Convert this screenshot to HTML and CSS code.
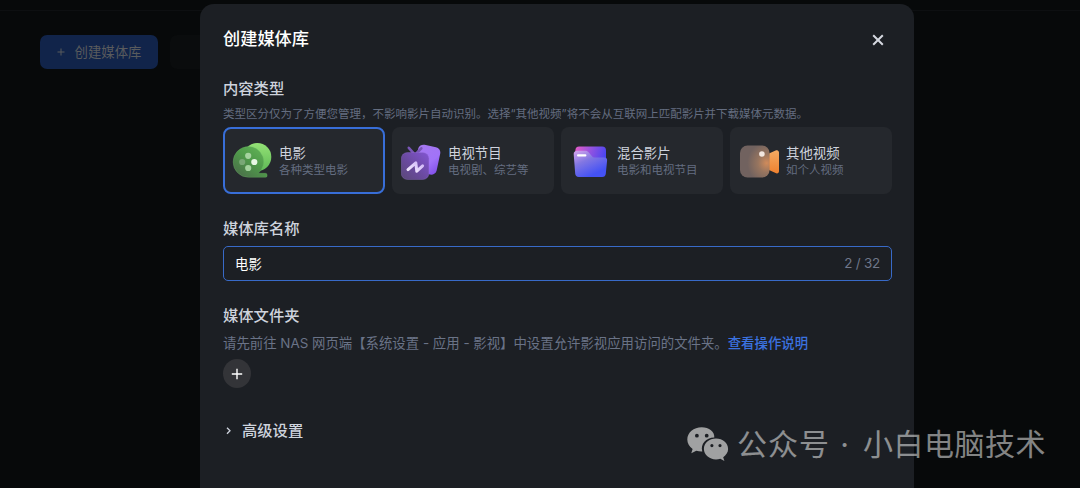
FILE: index.html
```html
<!DOCTYPE html>
<html lang="zh-CN">
<head>
    <meta charset="UTF-8">
    <meta name="viewport" content="width=device-width, initial-scale=1.0">
    <title>创建媒体库</title>
    <link rel="stylesheet" href="styles.css">
</head>
<body>
    <div class="page">
        <div class="topbar"></div>
        <div class="toolbar">
            <button type="button" class="create-btn">
                <svg width="8" height="8" viewBox="0 0 8 8"><path d="M4 .5v7M.5 4h7" stroke="currentColor" fill="none"/></svg>
                <span>创建媒体库</span>
            </button>
            <button type="button" class="refresh-btn" aria-label="刷新"></button>
        </div>
    </div>

    <!-- 弹窗 -->
    <div class="modal">
        <div class="modal-header">
            <h1>创建媒体库</h1>
            <button type="button" class="close-btn" aria-label="关闭">
                <svg width="12" height="12" viewBox="0 0 12 12"><path d="M1.2 1.2l9.6 9.6M10.8 1.2l-9.6 9.6" stroke="currentColor" stroke-width="2" fill="none"/></svg>
            </button>
        </div>

        <h2 class="type-title">内容类型</h2>
        <p class="type-hint">类型区分仅为了方便您管理，不影响影片自动识别。选择“其他视频”将不会从互联网上匹配影片并下载媒体元数据。</p>
        <div class="cards">
            <div class="card active">
                <svg class="card-icon" width="40" height="40" viewBox="0 0 40 40">
                    <defs>
                        <linearGradient id="reelBack" x1="0" y1="0" x2="0" y2="1">
                            <stop offset="0" stop-color="#94e276"/>
                            <stop offset="1" stop-color="#5fb956"/>
                        </linearGradient>
                        <linearGradient id="reelFront" x1="1" y1="0" x2=".2" y2="1">
                            <stop offset="0" stop-color="#66b85a"/>
                            <stop offset=".5" stop-color="#4f9b4a"/>
                            <stop offset="1" stop-color="#4b6f4a"/>
                        </linearGradient>
                    </defs>
                    <circle cx="25.3" cy="16" r="14" fill="url(#reelBack)"/>
                    <path d="M16.5 5.5a15.2 15.2 0 0 1 9.8 26.8h7.2a1.6 1.6 0 0 1 1.6 1.6v.8a1.6 1.6 0 0 1-1.6 1.6h-17a15.4 15.4 0 0 1 0-30.8z" fill="url(#reelFront)" stroke="#6fb868" stroke-opacity=".5" stroke-width=".6"/>
                    <circle cx="16.2" cy="14.8" r="3.1" fill="#a5d39f"/>
                    <circle cx="10.2" cy="21" r="3.1" fill="#79a776"/>
                    <circle cx="22.3" cy="21" r="3.1" fill="#e8f8e5"/>
                    <circle cx="16.2" cy="27" r="3.1" fill="#a5d39f"/>
                </svg>
                <div class="card-text">
                    <div class="card-name">电影</div>
                    <div class="card-desc">各种类型电影</div>
                </div>
            </div>
            <div class="card">
                <svg class="card-icon" width="40" height="40" viewBox="1.200 0 40 40">
                    <defs>
                        <linearGradient id="tvBack" x1="0" y1="0" x2="1" y2="1">
                            <stop offset="0" stop-color="#a678ef"/>
                            <stop offset=".6" stop-color="#a173f8"/>
                            <stop offset="1" stop-color="#7e4be8"/>
                        </linearGradient>
                        <linearGradient id="tvFront" x1="1" y1="0" x2="0" y2="1">
                            <stop offset="0" stop-color="#8355d4"/>
                            <stop offset=".55" stop-color="#6a4a9e"/>
                            <stop offset="1" stop-color="#5a4878"/>
                        </linearGradient>
                        <linearGradient id="tvLine" x1="0" y1="1" x2="1" y2="0">
                            <stop offset="0" stop-color="#f5edff"/>
                            <stop offset="1" stop-color="#cdb3f7"/>
                        </linearGradient>
                    </defs>
                    <rect x="16.2" y="4.600" width="22.6" height="28" rx="5.5" transform="rotate(12 27 19)" fill="url(#tvBack)"/>
                    <path d="M9 6.800l4.500 5M21.500 7.300L17 12" stroke="#7956b6" stroke-width="2.600" stroke-linecap="round"/>
                    <rect x="1.500" y="11.500" width="27.600" height="27" rx="6" fill="url(#tvFront)" stroke="#9a75d8" stroke-opacity=".5" stroke-width=".6"/>
                    <path d="M8.200 28.600l7.800-6.800 1 8.400 5.800-5.400" stroke="url(#tvLine)" stroke-width="3" fill="none" stroke-linecap="round" stroke-linejoin="round"/>
                </svg>
                <div class="card-text">
                    <div class="card-name">电视节目</div>
                    <div class="card-desc">电视剧、综艺等</div>
                </div>
            </div>
            <div class="card">
                <svg class="card-icon" width="40" height="40" viewBox=".6 0 40 40">
                    <defs>
                        <linearGradient id="folderBack" x1="0" y1="0" x2="1" y2=".3">
                            <stop offset="0" stop-color="#e75cc8"/>
                            <stop offset=".5" stop-color="#9353e0"/>
                            <stop offset="1" stop-color="#4a45f0"/>
                        </linearGradient>
                        <linearGradient id="folderFront" x1=".05" y1="0" x2=".6" y2=".9">
                            <stop offset="0" stop-color="#d5a4ee"/>
                            <stop offset=".45" stop-color="#8277e2"/>
                            <stop offset="1" stop-color="#4452f5"/>
                        </linearGradient>
                    </defs>
                    <rect x="6" y="5.500" width="30.600" height="26" rx="3.800" fill="url(#folderBack)"/>
                    <path d="M8 9.700h7.800c1.600 0 2.600.5 3.600 1.700l3 3.600c.9 1 1.900 1.500 3.300 1.500h9.100c2 0 3.100 1.200 2.900 3.100l-1.300 13.100c-.2 2-1.500 3.300-3.600 3.300H9.400c-2.200 0-3.400-1.200-3.600-3.200L4.300 13.300C4.100 11 5.600 9.700 8 9.700z" fill="url(#folderFront)"/>
                    <rect x="7.600" y="13.200" width="9.400" height="2.300" rx="1" fill="#fff"/>
                </svg>
                <div class="card-text">
                    <div class="card-name">混合影片</div>
                    <div class="card-desc">电影和电视节目</div>
                </div>
            </div>
            <div class="card">
                <svg class="card-icon" width="40" height="40" viewBox="-.5 0 40 40">
                    <defs>
                        <linearGradient id="camLens" x1="0" y1="0" x2="0" y2="1">
                            <stop offset="0" stop-color="#f5ab63"/>
                            <stop offset="1" stop-color="#ef812f"/>
                        </linearGradient>
                        <radialGradient id="camBody" cx=".9" cy=".55" r=".65">
                            <stop offset="0" stop-color="#d08b5b"/>
                            <stop offset=".45" stop-color="#97755f"/>
                            <stop offset="1" stop-color="#71625f"/>
                        </radialGradient>
                    </defs>
                    <path d="M29.500 12.600l6.600-3.100c1.900-.8 3.400.2 3.400 2.100v18.400c0 2-1.500 2.900-3.400 2.100l-6.600-3.100z" fill="url(#camLens)"/>
                    <rect x=".5" y="4.500" width="29.600" height="32" rx="7.500" fill="url(#camBody)"/>
                    <circle cx="22.400" cy="13" r="2.800" fill="#f1e6df"/>
                </svg>
                <div class="card-text">
                    <div class="card-name">其他视频</div>
                    <div class="card-desc">如个人视频</div>
                </div>
            </div>
        </div>

        <h2 class="name-title">媒体库名称</h2>
        <div class="name-field">
            <input type="text" value="电影" maxlength="32">
            <span class="counter">2 / 32</span>
        </div>

        <h2 class="folder-title">媒体文件夹</h2>
        <p class="folder-hint">请先前往 NAS 网页端【系统设置 - 应用 - 影视】中设置允许影视应用访问的文件夹。<a href="#">查看操作说明</a></p>
        <button type="button" class="add-btn" aria-label="添加文件夹">
            <svg width="12" height="12" viewBox="0 0 12 12"><path d="M6 .8v10.400M.8 6h10.400" stroke="currentColor" stroke-width="1.400" fill="none"/></svg>
        </button>

        <div class="advanced">
            <svg width="6" height="8" viewBox="0 0 6 8"><path d="M1 .8l3 3-3 3" stroke="currentColor" stroke-width="1.300" fill="none"/></svg>
            <h2>高级设置</h2>
        </div>
    </div>

    <!-- 水印 -->
    <div class="watermark">
        <svg width="42" height="34" viewBox="0 0 42 34">
            <path fill="currentColor" fill-rule="evenodd" d="M14.7.3C6.700.300.300 5.700.300 12.500c0 3.900 2 7.200 5.300 9.500L4.300 26.300l5-2.600c2 .6 3.800.9 6 .8-2.200-7.400 4-14 12-13.900C28 4.600 22 .3 14.700.3zM9.900 6.800a1.900 1.900 0 1 1 0 3.800 1.900 1.900 0 0 1 0-3.800zM19.700 6.800a1.900 1.900 0 1 1 0 3.800 1.900 1.900 0 0 1 0-3.800z"/>
            <path fill="currentColor" fill-rule="evenodd" d="M29 11.600c-6.800 0-12.100 4.700-12.100 10.400s5.300 10.400 12.100 10.400c1.500 0 2.900-.2 4.300-.7l4.100 2.200-1.200-3.700c2.900-1.900 4.900-4.900 4.900-8.200 0-5.700-5.400-10.400-12.100-10.400zM24.900 17a1.600 1.600 0 1 1 0 3.200 1.600 1.600 0 0 1 0-3.200zM33 17a1.600 1.600 0 1 1 0 3.200 1.600 1.600 0 0 1 0-3.200z"/>
        </svg>
        <span class="wm-label">公众号</span>
        <span class="wm-dot">·</span>
        <span class="wm-name">小白电脑技术</span>
    </div>
</body>
</html>
```

FILE: styles.css
```css
* {
    box-sizing: border-box;
}

body {
    margin: 0;
    height: 488px;
    position: relative;
    overflow: hidden;
    background-color: #07090a;
    font-family: Inter, "Noto Sans CJK SC", sans-serif;
    color: #ced3dd;
}

h1, h2, p {
    margin: 0;
}

button {
    font-family: inherit;
    border: none;
    padding: 0;
    cursor: pointer;
}

svg {
    display: block;
    flex: none;
}

.topbar {
    height: 11px;
    border-bottom: 1px solid #0d0f11;
}

.toolbar {
    display: flex;
    gap: 12px;
    padding: 24px 40px;
}

.create-btn {
    display: flex;
    align-items: center;
    justify-content: center;
    gap: 10px;
    width: 118px;
    height: 34px;
    border-radius: 7px;
    background-color: #11244a;
    color: #595b5d;
    font-size: 13.4px;
}

.create-btn span {
    padding-bottom: 2px;
}

.refresh-btn {
    width: 80px;
    height: 34px;
    border-radius: 7px;
    background-color: #0a0c0d;
}

.modal {
    position: absolute;
    left: 200px;
    top: 4px;
    width: 714px;
    height: 500px;
    padding: 23px 22px 0 23px;
    border-radius: 14px 14px 0 0;
    background-color: #1c1f24;
}

.modal-header {
    display: flex;
    justify-content: space-between;
    align-items: center;
    height: 24px;
}

h1 {
    font-size: 17.2px;
    line-height: 24px;
    font-weight: 500;
    color: #fff;
}

.close-btn {
    margin: 2px 8px 0 0;
    background: none;
    color: #d5d8e0;
}

h2 {
    font-size: 15.3px;
    line-height: 22px;
    font-weight: 500;
}

.type-title {
    margin-top: 27px;
}

.type-hint {
    margin: 5px 0 4px;
    font-size: 11.5px;
    line-height: 18px;
    color: #646d80;
    white-space: nowrap;
}

.cards {
    display: grid;
    grid-template-columns: repeat(4, 1fr);
    gap: 7px;
}

.card {
    display: flex;
    align-items: center;
    gap: 7px;
    height: 67px;
    padding-left: 9px;
    border-radius: 8px;
    background-color: #25282d;
}

.card.active {
    padding-left: 7px;
    border: 2px solid #386ed8;
}

.card-text {
    padding-top: 2px;
}

.card-name {
    font-size: 13.4px;
    line-height: 18px;
}

.card-desc {
    font-size: 11.5px;
    line-height: 17px;
    color: #646d80;
}

.name-title {
    margin-top: 24px;
}

.name-field {
    display: flex;
    align-items: center;
    height: 35px;
    margin-top: 6px;
    padding: 0 11px 2px;
    border: 1px solid #386ac8;
    border-radius: 5px;
}

.name-field input {
    flex: 1;
    padding: 0;
    border: none;
    outline: none;
    background: none;
    font-family: inherit;
    font-size: 13.4px;
    color: #fff;
}

.counter {
    font-size: 13.4px;
    letter-spacing: -.2px;
    color: #70778a;
}

.folder-title {
    margin-top: 24px;
}

.folder-hint {
    margin-top: 7px;
    font-size: 13.4px;
    line-height: 18px;
    color: #6a7387;
    white-space: nowrap;
}

.folder-hint a {
    color: #3b72e0;
    font-weight: 500;
    text-decoration: none;
}

.add-btn {
    display: flex;
    align-items: center;
    justify-content: center;
    width: 28px;
    height: 29px;
    margin-top: 7px;
    border-radius: 50%;
    background-color: #333438;
    color: #fff;
}

.advanced {
    display: flex;
    align-items: center;
    gap: 10px;
    margin-top: 32px;
    padding-left: 3px;
}

.watermark {
    position: absolute;
    left: 687px;
    top: 424px;
    display: flex;
    align-items: center;
    height: 40px;
    font-size: 30px;
    line-height: 40px;
    letter-spacing: 1px;
    white-space: nowrap;
    color: rgba(255, 255, 255, .5);
}

.watermark svg {
    color: #a0a1a2;
}

.wm-label {
    margin-left: 8px;
}

.wm-dot {
    width: 12px;
    margin: 0 12px 0 9px;
    text-align: center;
}

.wm-name {
    letter-spacing: .5px;
}
```
